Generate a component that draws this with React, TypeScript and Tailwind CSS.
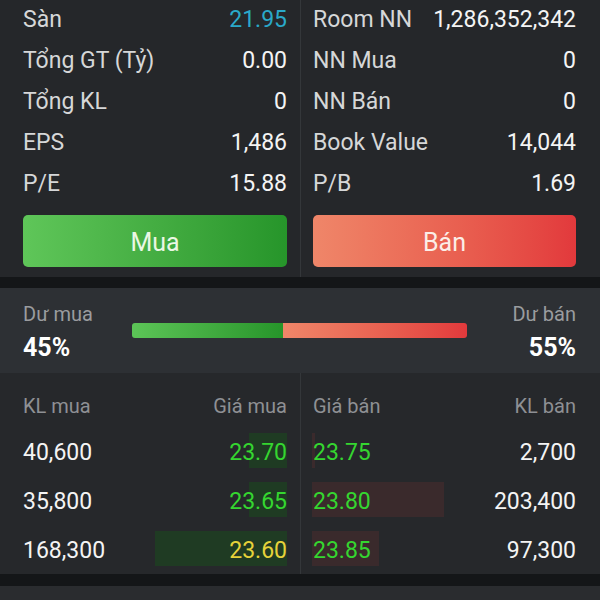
import React from "react";

const leftStats = [
  { label: "Sàn", value: "21.95", color: "text-[#2aa9c9]" },
  { label: "Tổng GT (Tỷ)", value: "0.00" },
  { label: "Tổng KL", value: "0" },
  { label: "EPS", value: "1,486" },
  { label: "P/E", value: "15.88" },
];

const rightStats = [
  { label: "Room NN", value: "1,286,352,342" },
  { label: "NN Mua", value: "0" },
  { label: "NN Bán", value: "0" },
  { label: "Book Value", value: "14,044" },
  { label: "P/B", value: "1.69" },
];

const bids = [
  { vol: "40,600", price: "23.70", depth: 38, color: "text-[#35d630]" },
  { vol: "35,800", price: "23.65", depth: 38, color: "text-[#35d630]" },
  { vol: "168,300", price: "23.60", depth: 132, color: "text-[#e6d23a]" },
];

const asks = [
  { vol: "2,700", price: "23.75", depth: 3 },
  { vol: "203,400", price: "23.80", depth: 132 },
  { vol: "97,300", price: "23.85", depth: 67 },
];

function StatRow({ label, value, color }: { label: string; value: string; color?: string }) {
  return (
    <div className="h-[41px] flex items-center justify-between text-[23px] leading-none">
      <span className="pt-[1px] text-[#d6d7d8]">{label}</span>
      <span className={`pt-[1px] ${color ?? "text-[#f4f4f4]"}`}>{value}</span>
    </div>
  );
}

export default function App() {
  return (
    <div className="w-[600px] h-[600px] overflow-hidden bg-[#141618] font-['Roboto',sans-serif]">
      {/* Stats + buttons */}
      <div className="h-[277px] bg-[#25272a] flex">
        <div className="w-[300px] pl-[23px] pr-[13px]">
          <div className="-mt-[2px]">
            {leftStats.map((s) => (
              <StatRow key={s.label} {...s} />
            ))}
          </div>
          <button className="mt-[12px] w-full h-[52px] pt-[3px] rounded-[5px] bg-gradient-to-r from-[#5fc659] to-[#26952a] text-[25px] text-[#eaf7e4]">
            Mua
          </button>
        </div>
        <div className="flex-1 border-l border-[#34373a] pl-[12px] pr-[24px]">
          <div className="-mt-[2px]">
            {rightStats.map((s) => (
              <StatRow key={s.label} {...s} />
            ))}
          </div>
          <button className="mt-[12px] w-full h-[52px] pt-[3px] rounded-[5px] bg-gradient-to-r from-[#ef8669] to-[#e2393c] text-[25px] text-[#fbeee8]">
            Bán
          </button>
        </div>
      </div>

      <div className="h-[11px]" />

      {/* Dư mua / Dư bán */}
      <div className="h-[85px] bg-[#2d3034] pl-[23px] pr-[24px] flex items-center">
        <div className="w-[109px] flex flex-col pt-[3px]">
          <span className="text-[20px] leading-none text-[#9a9c9f]">Dư mua</span>
          <span className="mt-[11px] text-[25px] leading-none font-bold text-white">45%</span>
        </div>
        <div className="w-[335px] h-[15px] rounded-[3px] overflow-hidden flex">
          <div className="w-[45%] bg-gradient-to-r from-[#5cc557] to-[#26952a]" />
          <div className="flex-1 bg-gradient-to-r from-[#ef8669] to-[#e2393c]" />
        </div>
        <div className="flex-1 flex flex-col items-end pt-[3px]">
          <span className="text-[20px] leading-none text-[#9a9c9f]">Dư bán</span>
          <span className="mt-[11px] text-[25px] leading-none font-bold text-white">55%</span>
        </div>
      </div>

      {/* Order book */}
      <div className="h-[201px] bg-[#26282b] flex">
        <div className="w-[300px] pl-[23px] pr-[13px]">
          <div className="h-[53px] pt-[22px] flex justify-between text-[20px] leading-[22px] text-[#8e9094]">
            <span>KL mua</span>
            <span>Giá mua</span>
          </div>
          {bids.map((b) => (
            <div key={b.price} className="h-[49px] flex items-center justify-between text-[23px] leading-none">
              <span className="pt-[3px] text-[#f4f4f4]">{b.vol}</span>
              <span className="relative h-[35px] pt-[3px] flex items-center">
                <span
                  className="absolute right-0 top-0 h-[35px] bg-[#1f3b23]"
                  style={{ width: b.depth }}
                />
                <span className={`relative ${b.color}`}>{b.price}</span>
              </span>
            </div>
          ))}
        </div>
        <div className="flex-1 border-l border-[#34373a] pl-[11px] pr-[24px]">
          <div className="h-[53px] pt-[22px] pl-[1px] flex justify-between text-[20px] leading-[22px] text-[#8e9094]">
            <span>Giá bán</span>
            <span>KL bán</span>
          </div>
          {asks.map((a) => (
            <div key={a.price} className="h-[49px] flex items-center justify-between text-[23px] leading-none">
              <span className="relative h-[35px] pt-[3px] flex items-center pl-[1px]">
                <span
                  className="absolute left-0 top-0 h-[35px] bg-[#3a2a2c]"
                  style={{ width: a.depth }}
                />
                <span className="relative text-[#35d630]">{a.price}</span>
              </span>
              <span className="pt-[3px] text-[#f4f4f4]">{a.vol}</span>
            </div>
          ))}
        </div>
      </div>

      <div className="h-[12px]" />
      <div className="h-[14px] bg-[#2a2c2f]" />
    </div>
  );
}
